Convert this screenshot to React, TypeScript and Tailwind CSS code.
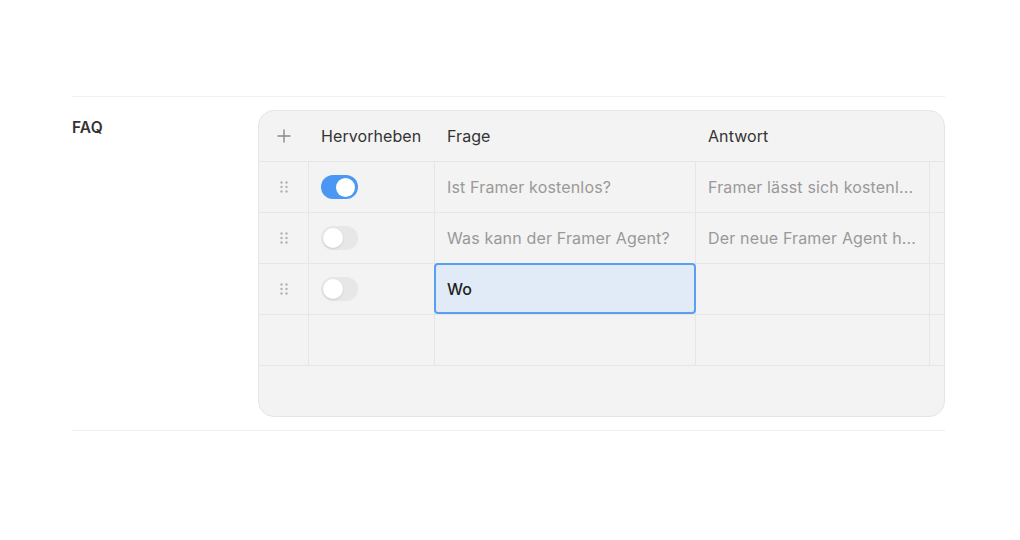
import React from "react";

function Toggle({ on }: { on: boolean }) {
  return on ? (
    <div className="w-[37px] h-[24px] rounded-full bg-[#4a98f3] flex items-center justify-end px-[3px]">
      <div className="w-[19px] h-[19px] rounded-full bg-white" />
    </div>
  ) : (
    <div className="w-[37px] h-[24px] rounded-full bg-[#e7e7e7] flex items-center justify-start px-[2px]">
      <div className="w-[20px] h-[20px] rounded-full bg-white shadow-[0_1px_2px_rgba(0,0,0,0.12)]" />
    </div>
  );
}

function Handle() {
  return (
    <svg width="8" height="12" viewBox="0 0 8 12">
      {[0, 1, 2].map((r) =>
        [0, 1].map((c) => (
          <circle key={`${r}-${c}`} cx={1.5 + c * 5} cy={1.5 + r * 4.5} r="1.2" fill="#b3b3b3" />
        ))
      )}
    </svg>
  );
}

const rows = [
  { on: true, q: "Ist Framer kostenlos?", a: "Framer lässt sich kostenl..." },
  { on: false, q: "Was kann der Framer Agent?", a: "Der neue Framer Agent h..." },
];

export default function App() {
  return (
    <div
      className="w-[1020px] h-[540px] bg-white"
      style={{ fontFamily: "Inter, 'Noto Sans', sans-serif" }}
    >
      <div className="pt-[96px] mx-[72px] w-[873px]">
        <div className="border-t border-[#efefef] border-b flex pt-[13px] pb-[13px]">
          <div className="w-[186px] pt-[8px] text-[15.5px] font-semibold text-[#333] leading-[20px] tracking-[0.01em]">FAQ</div>
          <div className="flex-1 rounded-[16px] border border-[#e5e5e5] bg-[#f3f3f3] overflow-hidden">
            <div className="grid grid-cols-[50px_126px_261px_234px_1fr] h-[51px] border-b border-[#e6e6e6] items-center text-[16px] text-[#333] tracking-[0.005em]">
              <div className="flex justify-center">
                <svg width="14" height="14" viewBox="0 0 14 14">
                  <path d="M7 1v12M1 7h12" stroke="#8a8a8a" strokeWidth="1.4" strokeLinecap="round" />
                </svg>
              </div>
              <div className="pl-[12px]">Hervorheben</div>
              <div className="pl-[12px]">Frage</div>
              <div className="pl-[12px]">Antwort</div>
              <div />
            </div>
            {rows.map((r, i) => (
              <div
                key={i}
                className="grid grid-cols-[50px_126px_261px_234px_1fr] h-[51px] border-b border-[#e6e6e6] text-[16px] text-[#999] tracking-[0.01em]"
              >
                <div className="flex items-center justify-center border-r border-[#e6e6e6]">
                  <Handle />
                </div>
                <div className="flex items-center pl-[12px] border-r border-[#e6e6e6]">
                  <Toggle on={r.on} />
                </div>
                <div className="flex items-center pl-[12px] border-r border-[#e6e6e6] whitespace-nowrap">{r.q}</div>
                <div className="flex items-center pl-[12px] border-r border-[#e6e6e6] whitespace-nowrap overflow-hidden">{r.a}</div>
                <div />
              </div>
            ))}
            <div className="grid grid-cols-[50px_126px_261px_234px_1fr] h-[51px] border-b border-[#e6e6e6] text-[16px]">
              <div className="flex items-center justify-center border-r border-[#e6e6e6]">
                <Handle />
              </div>
              <div className="flex items-center pl-[12px] border-r border-[#e6e6e6]">
                <Toggle on={false} />
              </div>
              <div className="relative border-r border-[#e6e6e6]">
                <div className="absolute top-[-1px] left-[-1px] right-[-1px] bottom-0 rounded-[4px] border-2 border-[#5a9ff0] bg-[#e1ebf7] flex items-center pl-[11px] font-medium text-[#222]">
                  Wo
                </div>
              </div>
              <div className="border-r border-[#e6e6e6]" />
              <div />
            </div>
            <div className="grid grid-cols-[50px_126px_261px_234px_1fr] h-[51px] border-b border-[#e6e6e6]">
              <div className="border-r border-[#e6e6e6]" />
              <div className="border-r border-[#e6e6e6]" />
              <div className="border-r border-[#e6e6e6]" />
              <div className="border-r border-[#e6e6e6]" />
              <div />
            </div>
            <div className="h-[50px]" />
          </div>
        </div>
      </div>
    </div>
  );
}
